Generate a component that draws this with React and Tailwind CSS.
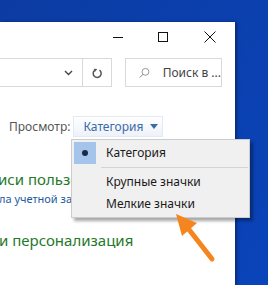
import React from "react";

const font = { fontFamily: '"Noto Sans", "Open Sans", sans-serif' };

function ViewMenu() {
  return (
    <div className="absolute left-[71px] top-[139px] w-[179px] border border-[#cccccc] bg-[#f0f0f0] py-[2px] pl-[2px] shadow-[3px_3px_3px_rgba(0,0,0,0.35)]">
      <div className="flex h-[22px] items-center">
        <div className="flex h-[22px] w-[22px] items-center justify-center bg-[#a5c4ec]">
          <div className="h-[6px] w-[6px] rounded-full bg-[#1a2a44]" />
        </div>
        <span className="ml-[10px] text-[12px] text-[#1a1a1a]">Категория</span>
      </div>
      <div className="my-[3px] ml-[27px] mr-[1px] h-px bg-[#d4d4d4]" />
      <div className="flex h-[22px] items-center pl-[32px] text-[12px] text-[#1a1a1a]">
        Крупные значки
      </div>
      <div className="flex h-[22px] items-center pl-[32px] text-[12px] text-[#1a1a1a]">
        Мелкие значки
      </div>
    </div>
  );
}

function Arrow() {
  return (
    <svg
      className="absolute left-[170px] top-[208px]"
      width="50"
      height="60"
      viewBox="0 0 50 60"
    >
      <line
        x1="42"
        y1="51"
        x2="17"
        y2="19"
        stroke="#f5861f"
        strokeWidth="5"
        strokeLinecap="round"
      />
      <polygon points="6,6 27,15 12,28" fill="#f5861f" />
    </svg>
  );
}

export default function App() {
  return (
    <div
      className="relative h-[285px] w-[268px] overflow-hidden bg-gradient-to-br from-[#0c3ca3] to-[#0a44ba]"
      style={font}
    >
      {/* Window */}
      <div className="absolute left-0 top-[22px] bottom-0 flex w-[235px] flex-col bg-white shadow-[2px_0_3px_rgba(0,0,0,0.35)]">
        {/* Title bar */}
        <div className="flex h-[30px] items-center justify-end pr-[2px]">
          <div className="flex h-[30px] w-[46px] items-center justify-center">
            <div className="h-px w-[10px] bg-[#111]" />
          </div>
          <div className="flex h-[30px] w-[46px] items-center justify-center pr-[3px]">
            <div className="h-[10px] w-[10px] border border-[#111]" />
          </div>
          <div className="flex h-[30px] w-[46px] items-center justify-center">
            <svg width="12" height="12" viewBox="0 0 12 12">
              <path d="M0.5 0.5 L11.5 11.5 M11.5 0.5 L0.5 11.5" stroke="#111" strokeWidth="1" />
            </svg>
          </div>
        </div>

        {/* Address / search row */}
        <div className="mt-[6px] flex h-[29px] items-stretch">
          <div className="ml-[-1px] flex w-[113px] border border-[#d9d9d9]">
            <div className="flex flex-1 items-center justify-end pr-[9px]">
              <svg width="9" height="6" viewBox="0 0 9 6">
                <path d="M1 1 L4.5 4.5 L8 1" fill="none" stroke="#444" strokeWidth="1.4" />
              </svg>
            </div>
            <div className="flex w-[29px] items-center justify-center border-l border-[#d9d9d9]">
              <svg width="11" height="12" viewBox="0 0 11 12">
                <path
                  d="M7.5 3.2 A4 4 0 1 1 2.6 3.4"
                  fill="none"
                  stroke="#555"
                  strokeWidth="1.5"
                />
                <path d="M1.2 1.2 L4.8 1.6 L2.4 4.6 Z" fill="#555" transform="translate(0.5,0.5)" />
              </svg>
            </div>
          </div>
          <div className="ml-[13px] flex w-[97px] items-center border border-[#d9d9d9]">
            <svg className="ml-[13px]" width="14" height="14" viewBox="0 0 14 14">
              <circle cx="8.5" cy="5.5" r="4.5" fill="none" stroke="#777" strokeWidth="1" />
              <path d="M5.3 8.7 L1 13" stroke="#777" strokeWidth="1.2" />
            </svg>
            <span className="ml-[13px] whitespace-nowrap text-[12px] text-[#444]">
              Поиск в ...
            </span>
          </div>
        </div>

        {/* View row */}
        <div className="mt-[29px] flex h-[21px] items-center pl-[9px]">
          <span className="text-[12px] text-[#555]">Просмотр:</span>
          <div className="ml-[3px] flex h-[21px] w-[90px] items-center border border-[#e3eaf4] bg-gradient-to-b from-[#ffffff] to-[#edf2f9] pl-[9px]">
            <span className="text-[12px] text-[#3b6aa8]">Категория</span>
            <svg className="ml-[7px]" width="8" height="5" viewBox="0 0 8 5">
              <path d="M0 0 L8 0 L4 5 Z" fill="#3b6aa8" />
            </svg>
          </div>
        </div>

        {/* Category list (partly hidden under the menu) */}
        <div className="mt-[32px] whitespace-nowrap">
          <div className="w-[71px] overflow-hidden">
            <div className="ml-[-2px] text-[15px] leading-[20px] text-[#25792a]">
              иси пользо
            </div>
          </div>
          <div className="w-[71px] overflow-hidden">
            <div className="ml-[-1px] text-[11px] leading-[20px] text-[#1d5aa3]">
              ла учетной за
            </div>
          </div>
          <div className="mt-[20px] ml-[-1px] text-[15px] leading-[22px] text-[#25792a]">
            и персонализация
          </div>
        </div>
      </div>

      <ViewMenu />
      <Arrow />
    </div>
  );
}
